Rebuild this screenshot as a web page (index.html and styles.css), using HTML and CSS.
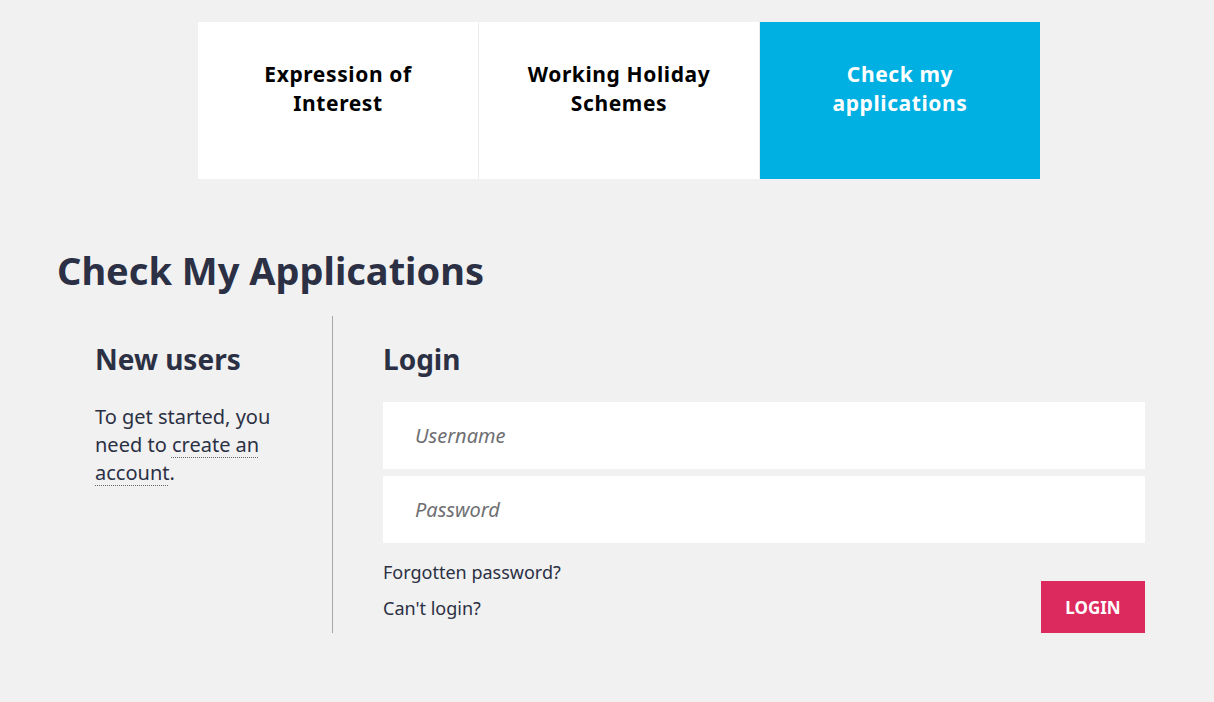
FILE: index.html
```html
<!DOCTYPE html>
<html lang="en">
<head>
<meta charset="utf-8">
<title>Check My Applications</title>
<link rel="stylesheet" href="styles.css">
</head>
<body>
<nav class="tabs">
  <a class="tab" href="#">Expression of<br>Interest</a>
  <a class="tab" href="#">Working Holiday<br>Schemes</a>
  <a class="tab active" href="#">Check my<br>applications</a>
</nav>
<main class="page">
  <h1 class="title">Check My Applications</h1>
  <div class="cols">
    <section class="new-users">
      <h2 class="sub">New users</h2>
      <p class="intro">To get started, you need to <a class="dotted" href="#">create an account</a>.</p>
    </section>
    <section class="login">
      <h2 class="sub">Login</h2>
      <form class="form">
        <input class="field" type="text" placeholder="Username">
        <input class="field" type="password" placeholder="Password">
        <div class="actions">
          <div class="links">
            <a class="link" href="#">Forgotten password?</a>
            <a class="link" href="#">Can't login?</a>
          </div>
          <button class="btn" type="button">LOGIN</button>
        </div>
      </form>
    </section>
  </div>
</main>
</body>
</html>
```
FILE: styles.css
```css
* { box-sizing: border-box; }
html, body { margin: 0; padding: 0; }
body {
  background: #f1f1f1;
  font-family: "Noto Sans", "DejaVu Sans", sans-serif;
  color: #2b3044;
}
.tabs {
  display: flex;
  margin: 22px 0 0 198px;
  width: 842px;
  height: 157px;
}
.tab {
  flex: 1;
  background: #fff;
  color: #000;
  text-decoration: none;
  font-weight: 700;
  font-size: 21px;
  letter-spacing: 0.6px;
  line-height: 29px;
  text-align: center;
  padding-top: 38px;
  border-right: 1px solid #ececec;
}
.tab.active {
  background: #00b0e2;
  color: #fff;
  border-right: none;
}
.page {
  padding: 0 69px 0 57px;
}
.title {
  margin: 66px 0 0;
  font-size: 38px;
  line-height: 50px;
  font-weight: 700;
  color: #2b3044;
}
.cols {
  display: flex;
  margin-top: 21px;
}
.new-users {
  width: 276px;
  padding-left: 38px;
  border-right: 1px solid #a8a8a8;
}
.login {
  flex: 1;
  padding-left: 50px;
}
.sub {
  margin: 26px 0 0;
  font-size: 28px;
  line-height: 34px;
  font-weight: 700;
}
.intro {
  margin: 27px 0 0;
  font-size: 20px;
  line-height: 28px;
  width: 200px;
}
.dotted {
  color: inherit;
  text-decoration: underline dotted #666;
  text-decoration-thickness: 1px;
  text-underline-offset: 5px;
}
.form {
  margin-top: 26px;
  display: flex;
  flex-direction: column;
  gap: 7px;
}
.field {
  height: 67px;
  border: none;
  background: #fff;
  padding: 0 32px;
  font-family: inherit;
  font-size: 20px;
  outline: none;
}
.field::placeholder {
  color: #6f6f73;
  font-style: italic;
}
.actions {
  display: flex;
  justify-content: space-between;
  align-items: flex-start;
  margin-top: 9px;
}
.links {
  display: flex;
  flex-direction: column;
  gap: 10px;
}
.link {
  color: #2b3044;
  text-decoration: none;
  font-size: 18px;
  line-height: 26px;
}
.btn {
  margin-top: 22px;
  width: 104px;
  height: 52px;
  border: none;
  background: #dc2a5e;
  color: #fff;
  font-family: inherit;
  font-weight: 700;
  font-size: 17px;
}
```
